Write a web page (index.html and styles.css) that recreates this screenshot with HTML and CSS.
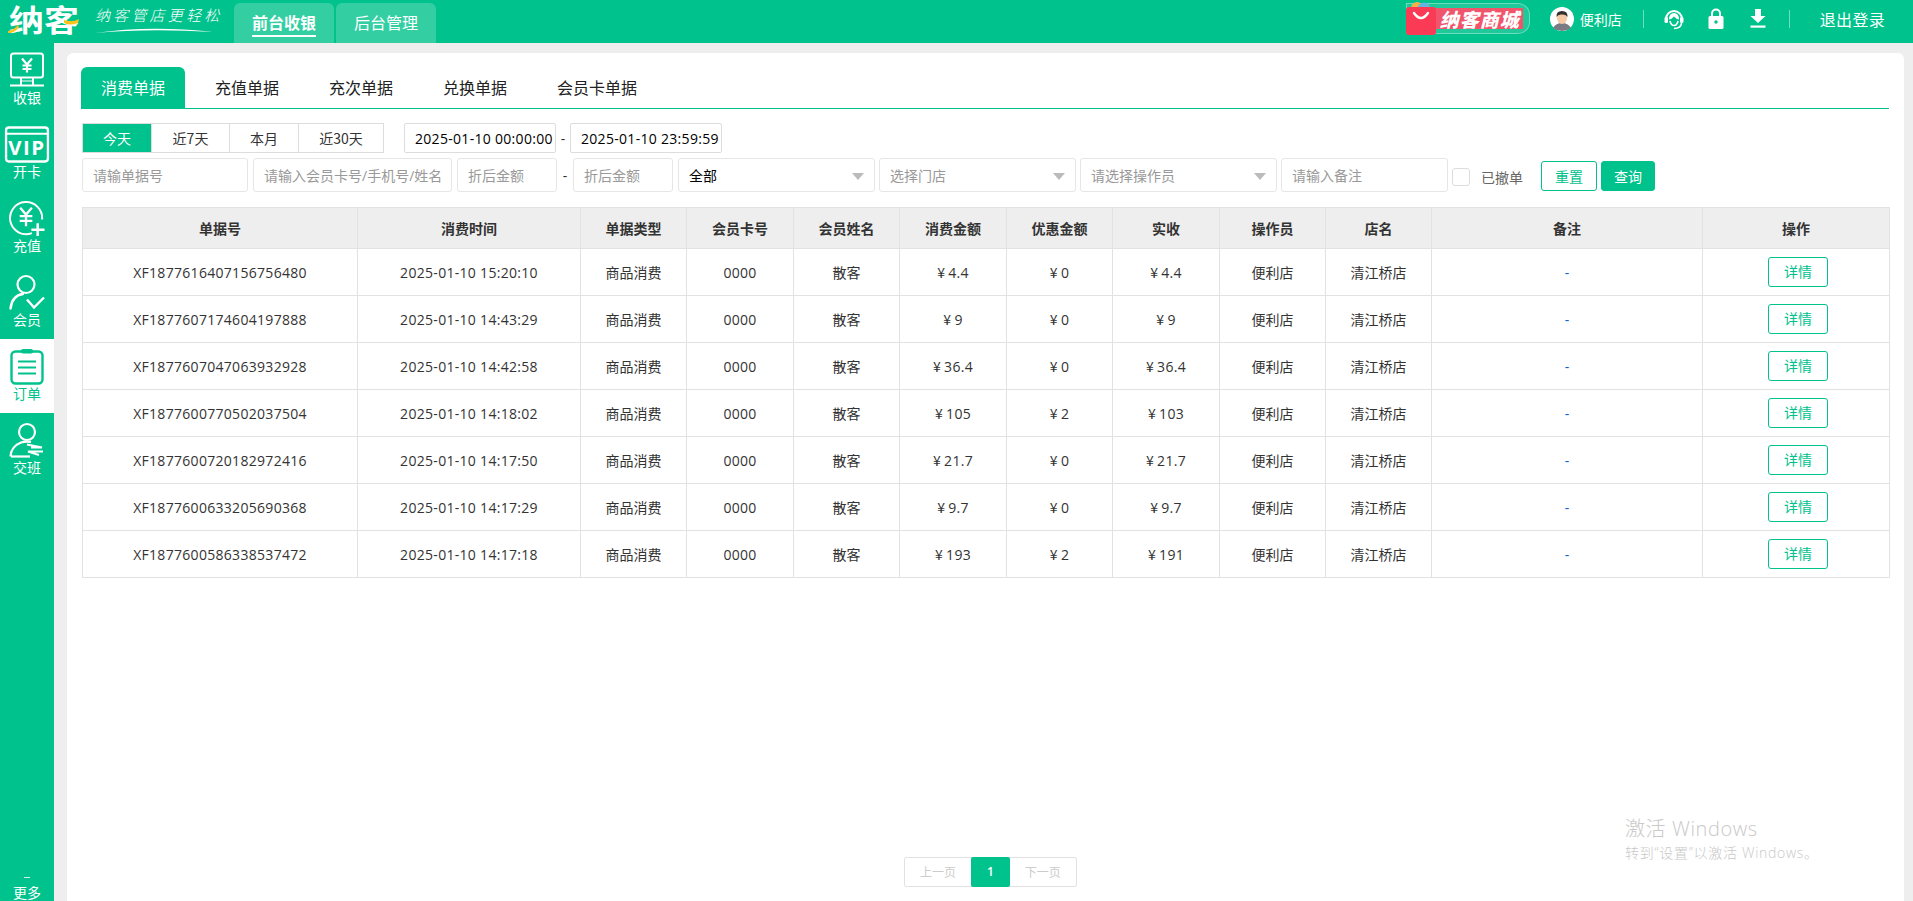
FILE: index.html
```html
<!DOCTYPE html>
<html lang="zh-CN">
<head>
<meta charset="utf-8">
<title>纳客收银</title>
<link rel="stylesheet" href="styles.css">
</head>
<body>
<header class="topbar">
  <div class="brand">
    <span class="brand-name">纳客</span>
    <svg class="brand-accent" width="74" height="30" viewBox="0 0 74 30"><path d="M0 28 Q6 27 10 22 L11 24 Q7 30 0 30Z" fill="#ffc21a"/><path d="M56 17 Q64 20 71 16 L70 20 Q62 23 56 20Z" fill="#ffc21a"/></svg>
    <div class="slogan">
      <span class="slogan-text">纳客管店更轻松</span>
      <svg class="slogan-line" width="118" height="6" viewBox="0 0 118 6"><path d="M0 5 Q55 -3 118 4 Q55 0 0 5Z" fill="#fff"/></svg>
    </div>
  </div>
  <nav class="main-nav">
    <a class="nav-tab nav-on"><span>前台收银</span></a>
    <a class="nav-tab"><span>后台管理</span></a>
  </nav>
  <div class="top-right">
    <div class="mall">
      <span class="mall-text">纳客商城</span>
      <svg class="mall-bag" width="31" height="33" viewBox="0 0 31 33"><circle cx="11" cy="6" r="6" fill="#f5b04a"/><circle cx="18" cy="7" r="6.5" fill="#62b6dd"/><rect x="0" y="5" width="30" height="28" rx="3" fill="#fb3a55"/><path d="M8 11 Q15 21 22 11" fill="none" stroke="#fff" stroke-width="2.4" stroke-linecap="round"/></svg>
    </div>
    <svg class="avatar" width="24" height="24" viewBox="0 0 24 24"><circle cx="12" cy="12" r="12" fill="#fff"/><path d="M3 21 Q6 16 12 16 Q18 16 21 21 Q17 24 12 24 Q7 24 3 21Z" fill="#7a7a85"/><ellipse cx="12" cy="11" rx="5" ry="6" fill="#f6c8a4"/><path d="M6.5 10 Q6 4 12 4 Q18 4 17.5 10 Q16 7 12 7.5 Q8 7 6.5 10Z" fill="#33312f"/></svg>
    <span class="user-name">便利店</span>
    <i class="sep"></i>
    <svg class="tool tool-headset" width="22" height="22" viewBox="0 0 22 22"><path d="M3 11 A8 8 0 0 1 19 11" fill="none" stroke="#fff" stroke-width="2"/><path d="M6 11.500 Q6 5 11 5 Q16 5 16 11.500 Q13 11 11 8.500 Q9 11 6 11.500Z" fill="#fff"/><path d="M7 13 Q8 17.500 11 17.500 Q14 17.500 15 13" fill="none" stroke="#fff" stroke-width="1.600"/><rect x="1.500" y="9" width="3.500" height="6" rx="1.500" fill="#fff"/><rect x="17" y="9" width="3.500" height="6" rx="1.500" fill="#fff"/><path d="M18.500 15 Q18 20.500 11 20.500" fill="none" stroke="#fff" stroke-width="1.600"/></svg>
    <svg class="tool tool-lock" width="16" height="21" viewBox="0 0 16 21"><path d="M4 9 V5.500 A4 4 0 0 1 12 5.500 V9" fill="none" stroke="#fff" stroke-width="2"/><rect x="0.500" y="8" width="15" height="13" rx="1.500" fill="#fff"/><circle cx="8" cy="14" r="1.700" fill="#00c28c"/></svg>
    <svg class="tool tool-down" width="16" height="19" viewBox="0 0 16 19"><path d="M5 0 H11 V7 H15.500 L8 14 L0.500 7 H5Z" fill="#fff"/><rect x="0.500" y="16.500" width="15" height="2.200" fill="#fff"/></svg>
    <i class="sep sep-last"></i>
    <span class="logout">退出登录</span>
  </div>
</header>

<div class="shell">
  <aside class="sidebar">
    <a class="side-item">
      <svg width="36" height="36" viewBox="0 0 36 36"><rect x="2" y="1" width="32" height="24" rx="2.500" fill="none" stroke="#fff" stroke-width="2"/><path d="M13 6 L18 12 L23 6 M18 12 V20 M13.500 13 H22.500 M13.500 16.500 H22.500" fill="none" stroke="#fff" stroke-width="2.200"/><path d="M12 25 V32 M24 25 V32 M1 33 H35" stroke="#fff" stroke-width="2" fill="none"/><path d="M12 28.500 H24" stroke="#fff" stroke-width="1"/></svg>
      <span>收银</span>
    </a>
    <a class="side-item">
      <svg width="46" height="38" viewBox="0 0 46 38"><rect x="1.500" y="1.500" width="43" height="35" rx="3" fill="none" stroke="#fff" stroke-width="2.400"/><path d="M2 8 H44" stroke="#fff" stroke-width="2"/><text x="23" y="30" text-anchor="middle" class="vip-text">VIP</text></svg>
      <span>开卡</span>
    </a>
    <a class="side-item">
      <svg width="38" height="38" viewBox="0 0 38 38"><path d="M24 34 A16.500 16.500 0 1 1 34.500 20" fill="none" stroke="#fff" stroke-width="2"/><path d="M12 8 L18 15 L24 8 M18 15 V27 M11.500 16.500 H24.500 M11.500 21.500 H24.500" fill="none" stroke="#fff" stroke-width="2.400"/><path d="M30 24 V37 M23.500 30.500 H37" stroke="#fff" stroke-width="2.600" fill="none"/></svg>
      <span>充值</span>
    </a>
    <a class="side-item">
      <svg width="36" height="36" viewBox="0 0 36 36"><circle cx="17" cy="10" r="8.500" fill="none" stroke="#fff" stroke-width="2.200"/><path d="M1.500 34 Q3 21 14 19.500" fill="none" stroke="#fff" stroke-width="2.400" stroke-linecap="round"/><path d="M18 25 L25 33 L35 23" fill="none" stroke="#fff" stroke-width="2.400"/></svg>
      <span>会员</span>
    </a>
    <a class="side-item side-on">
      <svg width="34" height="36" viewBox="0 0 34 36"><rect x="1.500" y="3" width="31" height="32" rx="4" fill="none" stroke="#00c28c" stroke-width="2.400"/><rect x="11" y="0.500" width="12" height="4.500" rx="2" fill="#00c28c"/><path d="M8 13 H26 M8 19 H26 M8 25 H26" stroke="#00c28c" stroke-width="2.200"/></svg>
      <span>订单</span>
    </a>
    <a class="side-item">
      <svg width="36" height="36" viewBox="0 0 36 36"><circle cx="18" cy="9.500" r="8" fill="none" stroke="#fff" stroke-width="2.200"/><path d="M1.500 34 Q2 24 12 20 Q17 18.500 22 19.500" fill="none" stroke="#fff" stroke-width="2.200"/><path d="M2 34 H21" stroke="#fff" stroke-width="2.200"/><path d="M18 22 L33 25 H22 M34 29 H19 L30 32.500" fill="none" stroke="#fff" stroke-width="2.200"/></svg>
      <span>交班</span>
    </a>
    <a class="side-more">
      <i class="more-dots"></i>
      <span>更多</span>
    </a>
  </aside>

  <main class="content">
    <section class="card">
      <div class="bill-tabs">
        <a class="bill-tab bill-on">消费单据</a>
        <a class="bill-tab">充值单据</a>
        <a class="bill-tab">充次单据</a>
        <a class="bill-tab">兑换单据</a>
        <a class="bill-tab">会员卡单据</a>
      </div>

      <div class="range-row">
        <div class="range-group">
          <a class="range-btn range-on r1">今天</a>
          <a class="range-btn r2">近7天</a>
          <a class="range-btn r3">本月</a>
          <a class="range-btn r4">近30天</a>
        </div>
        <input class="date-input" value="2025-01-10 00:00:00">
        <span class="dash">-</span>
        <input class="date-input" value="2025-01-10 23:59:59">
      </div>

      <div class="search-row">
        <input class="field w-bill" placeholder="请输单据号">
        <input class="field w-member" placeholder="请输入会员卡号/手机号/姓名">
        <input class="field w-amount" placeholder="折后金额">
        <span class="dash dash-amount">-</span>
        <input class="field w-amount" placeholder="折后金额">
        <div class="pick w-all pick-value">全部<i class="caret"></i></div>
        <div class="pick w-store">选择门店<i class="caret"></i></div>
        <div class="pick w-oper">请选择操作员<i class="caret"></i></div>
        <input class="field w-note" placeholder="请输入备注">
        <label class="undo"><i class="check"></i><span>已撤单</span></label>
        <a class="btn-reset">重置</a>
        <a class="btn-query">查询</a>
      </div>

      <table class="bills">
        <colgroup>
          <col class="c-no"><col class="c-time"><col class="c-s1"><col class="c-s2"><col class="c-s1"><col class="c-s2"><col class="c-s1"><col class="c-s2"><col class="c-s1"><col class="c-s1"><col class="c-note"><col class="c-op">
        </colgroup>
        <thead>
          <tr><th>单据号</th><th>消费时间</th><th>单据类型</th><th>会员卡号</th><th>会员姓名</th><th>消费金额</th><th>优惠金额</th><th>实收</th><th>操作员</th><th>店名</th><th>备注</th><th>操作</th></tr>
        </thead>
        <tbody>
          <tr><td>XF1877616407156756480</td><td>2025-01-10 15:20:10</td><td>商品消费</td><td>0000</td><td>散客</td><td><span class="yen">¥</span>4.4</td><td><span class="yen">¥</span>0</td><td><span class="yen">¥</span>4.4</td><td>便利店</td><td>清江桥店</td><td class="note">-</td><td><a class="detail">详情</a></td></tr>
          <tr><td>XF1877607174604197888</td><td>2025-01-10 14:43:29</td><td>商品消费</td><td>0000</td><td>散客</td><td><span class="yen">¥</span>9</td><td><span class="yen">¥</span>0</td><td><span class="yen">¥</span>9</td><td>便利店</td><td>清江桥店</td><td class="note">-</td><td><a class="detail">详情</a></td></tr>
          <tr><td>XF1877607047063932928</td><td>2025-01-10 14:42:58</td><td>商品消费</td><td>0000</td><td>散客</td><td><span class="yen">¥</span>36.4</td><td><span class="yen">¥</span>0</td><td><span class="yen">¥</span>36.4</td><td>便利店</td><td>清江桥店</td><td class="note">-</td><td><a class="detail">详情</a></td></tr>
          <tr><td>XF1877600770502037504</td><td>2025-01-10 14:18:02</td><td>商品消费</td><td>0000</td><td>散客</td><td><span class="yen">¥</span>105</td><td><span class="yen">¥</span>2</td><td><span class="yen">¥</span>103</td><td>便利店</td><td>清江桥店</td><td class="note">-</td><td><a class="detail">详情</a></td></tr>
          <tr><td>XF1877600720182972416</td><td>2025-01-10 14:17:50</td><td>商品消费</td><td>0000</td><td>散客</td><td><span class="yen">¥</span>21.7</td><td><span class="yen">¥</span>0</td><td><span class="yen">¥</span>21.7</td><td>便利店</td><td>清江桥店</td><td class="note">-</td><td><a class="detail">详情</a></td></tr>
          <tr><td>XF1877600633205690368</td><td>2025-01-10 14:17:29</td><td>商品消费</td><td>0000</td><td>散客</td><td><span class="yen">¥</span>9.7</td><td><span class="yen">¥</span>0</td><td><span class="yen">¥</span>9.7</td><td>便利店</td><td>清江桥店</td><td class="note">-</td><td><a class="detail">详情</a></td></tr>
          <tr><td>XF1877600586338537472</td><td>2025-01-10 14:17:18</td><td>商品消费</td><td>0000</td><td>散客</td><td><span class="yen">¥</span>193</td><td><span class="yen">¥</span>2</td><td><span class="yen">¥</span>191</td><td>便利店</td><td>清江桥店</td><td class="note">-</td><td><a class="detail">详情</a></td></tr>
        </tbody>
      </table>

      <div class="pager">
        <a class="page-btn">上一页</a>
        <a class="page-num">1</a>
        <a class="page-btn">下一页</a>
      </div>
    </section>
  </main>
</div>

<div class="activate">
  <div class="activate-title">激活 Windows</div>
  <div class="activate-sub">转到“设置”以激活 Windows。</div>
</div>
</body>
</html>
```

FILE: styles.css
```css
* { box-sizing: border-box; }
html, body { margin: 0; padding: 0; height: 901px; overflow: hidden; }
body { font-family: "Open Sans", "Noto Sans CJK SC", sans-serif; font-size: 14px; color: #333; background: #eee; position: relative; }
a { color: inherit; text-decoration: none; display: block; }
i { font-style: normal; display: block; }
svg { display: block; flex: none; }

/* top bar */
.topbar { height: 43px; background: #00c28c; display: flex; align-items: flex-end; color: #fff; }
.brand { position: relative; width: 234px; height: 43px; flex: none; }
.brand-name { position: absolute; left: 9px; top: 3px; font-family: "Liberation Sans", "Noto Sans CJK SC", sans-serif; font-weight: 700; font-size: 35px; line-height: 39px; color: #fff; transform: scaleY(.86); transform-origin: top left; }
.brand-accent { position: absolute; left: 8px; top: 3px; }
.slogan { position: absolute; left: 95px; top: 5px; width: 126px; }
.slogan-text { display: block; font-family: "Noto Sans CJK SC", sans-serif; font-weight: 300; font-style: italic; font-size: 15px; line-height: 20px; letter-spacing: 3.2px; white-space: nowrap; }
.slogan-line { margin-top: 3px; }
.main-nav { display: flex; gap: 2px; height: 40px; }
.nav-tab { width: 100px; height: 40px; background: #33cfa3; border-radius: 6px 6px 0 0; font-size: 16px; text-align: center; line-height: 38px; color: #fff; font-family: "Noto Sans CJK SC", sans-serif; }
.nav-tab span { display: inline-block; height: 34px; line-height: 38px; }
.nav-on { font-weight: 700; }
.nav-on span { border-bottom: 2px solid #fff; }
.top-right { margin-left: auto; height: 43px; display: flex; align-items: center; padding-right: 28px; }
.mall { position: relative; width: 124px; height: 31px; margin-top: -7px; border: 1px solid rgba(255,255,255,.35); border-radius: 0 12px 12px 0; background: rgba(255,255,255,.12); }
.mall-bag { position: absolute; left: -1px; top: -2px; }
.mall-text { position: absolute; left: 29px; top: 4px; height: 21px; padding: 0 3px 0 4px; background: #f0556b; font-family: "Noto Sans CJK SC", sans-serif; font-weight: 900; font-style: italic; font-size: 19px; line-height: 21px; color: #fff; white-space: nowrap; letter-spacing: 1px; }
.avatar { margin: -6px 0 0 20px; }
.user-name { margin: -6px 0 0 6px; width: 43px; font-size: 14px; white-space: nowrap; font-family: "Noto Sans CJK SC", sans-serif; }
.sep { width: 1px; height: 18px; background: rgba(255,255,255,.45); margin: -6px 0 0 20px; }
.tool { margin-top: -6px; }
.tool-headset { margin-left: 19px; }
.tool-lock { margin-left: 23px; }
.tool-down { margin-left: 26px; }
.sep-last { margin-left: 23px; }
.logout { margin: -6px 0 0 30px; font-size: 16px; letter-spacing: .3px; white-space: nowrap; font-family: "Noto Sans CJK SC", sans-serif; }

/* shell */
.shell { display: flex; height: 858px; }
.sidebar { width: 54px; flex: none; background: #00c28c; position: relative; }
.side-item { height: 74px; display: flex; flex-direction: column; align-items: center; color: #fff; padding-top: 9px; font-family: "Noto Sans CJK SC", sans-serif; font-size: 14px; line-height: 16px; }
.side-item svg { height: 37px; margin-bottom: 0; }
.side-on { background: #fff; color: #00c28c; }
.vip-text { font-family: "Open Sans", sans-serif; font-weight: 700; font-size: 21px; letter-spacing: 1.500px; fill: #fff; }
.side-more { position: absolute; left: 0; right: 0; bottom: 0; display: flex; flex-direction: column; align-items: center; color: #fff; font-family: "Noto Sans CJK SC", sans-serif; line-height: 16px; height: 24px; }
.more-dots { width: 6px; height: 1px; background: #fff; opacity: .8; margin-bottom: 6px; }

.content { flex: 1; min-width: 0; padding: 10px 9px 0 13px; }
.card { height: 848px; background: #fff; border-radius: 6px 6px 0 0; padding: 14px 15px 0 14px; display: flex; flex-direction: column; }

/* bill tabs */
.bill-tabs { height: 42px; display: flex; border-bottom: 1px solid #00c28c; flex: none; }
.bill-tab { width: 114px; height: 41px; font-size: 16px; line-height: 41px; text-align: center; color: #222; font-family: "Noto Sans CJK SC", sans-serif; }
.bill-on { width: 104px; background: #00c28c; color: #fff; border-radius: 6px 6px 0 0; }
.bill-tab:nth-child(2) { margin-left: 5px; }
.bill-tab:nth-child(5) { width: 130px; }

/* filters */
.range-row { display: flex; align-items: center; margin: 14px 0 0 1px; height: 30px; }
.range-group { display: flex; height: 30px; border: 1px solid #ddd; width: 302px; margin-right: 20px; }
.range-btn { text-align: center; line-height: 28px; border-left: 1px solid #ddd; font-family: "Noto Sans CJK SC", sans-serif; font-size: 14px; color: #333; }
.r1 { width: 68px; border-left: 0; }
.r2 { width: 78px; }
.r3 { width: 69px; }
.r4 { width: 85px; }
.range-on { background: #00c28c; color: #fff; }
.date-input { width: 152px; height: 30px; border: 1px solid #ddd; border-radius: 2px; padding: 0 0 0 10px; text-align: left; font: 14px "Open Sans", sans-serif; letter-spacing: .3px; color: #000; background: #fff; outline: 0; }
.dash { width: 14px; text-align: center; color: #333; font-size: 14px; }

.search-row { display: flex; align-items: center; margin: 5px 0 0 1px; height: 34px; gap: 5px; }
.field, .pick { height: 34px; border: 1px solid #e6e6e6; border-radius: 3px; background: #fff; padding: 0 10px; font: 14px "Open Sans", "Noto Sans CJK SC", sans-serif; color: #999; outline: 0; flex: none; }
.field::placeholder { color: #999; opacity: 1; }
.pick { position: relative; line-height: 32px; font-family: "Noto Sans CJK SC", sans-serif; }
.pick-value { color: #000; }
.caret { position: absolute; right: 10px; top: 14px; width: 0; height: 0; border-left: 6px solid transparent; border-right: 6px solid transparent; border-top: 7px solid #bbb; }
.w-bill { width: 166px; }
.w-member { width: 199px; }
.w-amount { width: 100px; }
.dash-amount { width: 6px; }
.w-all { width: 197px; }
.w-store { width: 197px; margin-left: -1px; }
.w-oper { width: 197px; margin-left: -1px; }
.w-note { width: 167px; margin-left: -1px; }
.undo { display: flex; align-items: center; margin-left: -1px; width: 85px; flex: none; color: #666; font-family: "Noto Sans CJK SC", sans-serif; font-size: 14px; }
.check { width: 18px; height: 18px; border: 1px solid #ddd; border-radius: 3px; margin: 3px 11px 0 0; flex: none; }
.undo span { margin-top: 3px; white-space: nowrap; }
.btn-reset, .btn-query { height: 30px; flex: none; text-align: center; border-radius: 3px; font-family: "Noto Sans CJK SC", sans-serif; font-size: 14px; line-height: 28px; border: 1px solid #00c28c; margin-top: 2px; }
.btn-reset { width: 56px; color: #00c28c; background: #fff; margin-left: -1px; }
.btn-query { width: 54px; color: #fff; background: #00c28c; margin-left: -1px; }

/* table */
.bills { margin: 15px 0 0 1px; width: 1807px; border-collapse: collapse; table-layout: fixed; flex: none; }
.c-no { width: 275px; } .c-time { width: 223px; } .c-s1 { width: 106px; } .c-s2 { width: 107px; } .c-note { width: 271px; } .c-op { width: 187px; }
.bills th, .bills td { border: 1px solid #e2e2e2; text-align: center; padding: 0; font-size: 14px; color: #333; }
.bills th { height: 41px; background: #eee; font-weight: 700; font-family: "Noto Sans CJK SC", sans-serif; }
.bills td { height: 47px; }
.bills td:nth-child(1), .bills td:nth-child(2), .bills td:nth-child(4), .bills td:nth-child(6), .bills td:nth-child(7), .bills td:nth-child(8) { letter-spacing: .3px; }
.bills td.note { color: #0a66cc; }
.bills td:last-child { padding-left: 4px; }
.yen { font-family: "Noto Sans CJK SC", sans-serif; margin-right: 3px; }
.detail { width: 60px; height: 30px; margin: 0 auto; border: 1px solid #00c28c; border-radius: 3px; line-height: 28px; color: #00c28c; }

/* pager */
.pager { margin: auto 0 14px 823px; display: flex; width: 173px; height: 30px; border: 1px solid #e2e2e2; border-radius: 2px; flex: none; }
.page-btn { width: 67px; text-align: center; line-height: 28px; color: #ccc; font-size: 12px; font-family: "Noto Sans CJK SC", sans-serif; }
.page-num { width: 39px; height: 30px; margin-top: -1px; background: #00c28c; color: #fff; text-align: center; line-height: 30px; font-size: 12px; font-weight: 600; border-radius: 2px; }

/* activation watermark */
.activate { position: absolute; left: 1625px; top: 815px; color: #c9c9c9; font-family: "Open Sans", "Noto Sans CJK SC", sans-serif; white-space: nowrap; }
.activate-title { font-size: 20px; line-height: 28px; font-weight: 300; letter-spacing: .6px; }
.activate-sub { font-size: 14px; line-height: 20px; font-weight: 300; letter-spacing: .7px; }
```
